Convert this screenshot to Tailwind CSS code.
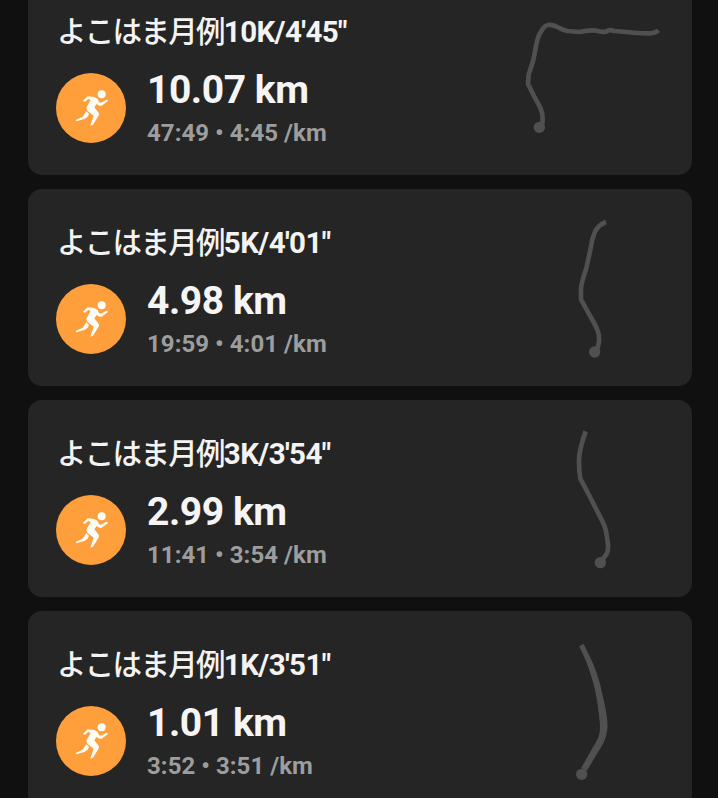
<!DOCTYPE html>
<html lang="ja">
<head>
  <meta charset="UTF-8">
  <title>Activities</title>
  <script src="https://cdn.jsdelivr.net/npm/@tailwindcss/browser@4"></script>
</head>
<body class="bg-[#101010] h-screen overflow-hidden font-['Roboto','Noto_Sans_CJK_JP',sans-serif]">
  <!-- List is scrolled a little, so the first card starts above the window -->
  <main id="activities" class="-mt-[22px] pl-7 pr-[26px] flex flex-col gap-3.5"></main>

  <script>
    // Data
    const activities = [
      {
        name: 'よこはま月例', race: `10K/4'45"`, distance: '10.07 km', stats: '47:49 • 4:45 /km',
        viewBox: '24 -21 450 450', dot: [88, 352], width: 14,
        route: 'M445 61Q438 69 420 70Q385 71 350 66L312 63Q298 57 288 65Q272 67 260 62Q236 59 208 66L172 63Q158 60 148 54Q126 43 116 45Q104 45 94 63Q84 78 79 103L70 150L56 194L54 222L72 258L91 293Q98 312 98 325L97 342'
      },
      {
        name: 'よこはま月例', race: `5K/4'01"`, distance: '4.98 km', stats: '19:59 • 4:01 /km',
        viewBox: '-126 12 450 450', dot: [104, 426], width: 14,
        route: 'M138 36Q116 44 105 65Q95 88 92 115L79 175Q65 215 63 235L63 268L82 303L104 342Q116 365 117 380Q119 398 112 416'
      },
      {
        name: 'よこはま月例', race: `3K/3'54"`, distance: '2.99 km', stats: '11:41 • 3:54 /km',
        viewBox: '-126 15 450 450', dot: [121, 428], width: 14,
        route: 'M77 34Q56 92 57 125Q57 155 61 176L87 225L120 290Q138 322 140 345L144 372Q145 395 139 403L126 420'
      },
      {
        name: 'よこはま月例', race: `1K/3'51"`, distance: '1.01 km', stats: '3:52 • 3:51 /km',
        viewBox: '-126 3 450 450', dot: [65, 418], width: 15,
        route: 'M64 30Q90 80 105 135Q120 185 127 265Q129 300 118 318L70 403M80 62Q107 115 120 180Q136 245 135 275Q134 300 123 322L74 404'
      }
    ];

    // Render cards
    const activitiesEl = document.getElementById('activities');
    activities.forEach(item => {
      const card = document.createElement('section');
      card.className = 'h-[197px] shrink-0 rounded-[14px] bg-[#252525] flex items-start justify-between pl-7 pr-6';
      card.innerHTML = `
        <div class="pt-9">
          <h2 class="pl-px text-[29.5px] leading-9 font-medium text-[#f3f3f3] whitespace-nowrap"><span class="tracking-[-1.7px]">${item.name}</span><span class="font-bold tracking-[-0.6px]">${item.race}</span></h2>
          <div class="mt-[18px] flex items-center gap-[21px]">
            <svg class="size-[70px] rounded-full bg-[#ff9f3c]" viewBox="18 24 210 210" fill="#fffdf8">
              <circle cx="155" cy="87.5" r="12" />
              <path d="M99 107L113 94L133 96L143 102L147 111L153 113L169 104L175 107L155 122L148 122L140 117L133 127L146 143L147 150L129 179L121 182L131 152L112 137L109 128L122 105L115 102L104 111Z" />
              <path d="M109 139L117 146L113 155L103 162L79 169L77 165L98 155Z" />
            </svg>
            <div class="pt-px whitespace-nowrap">
              <p class="-mt-px text-[39px] leading-[44px] font-bold tracking-[-0.45px] text-[#f5f5f5]">${item.distance}</p>
              <p class="mt-[5px] -mb-px text-2xl leading-8 font-bold tracking-[0.05px] text-[#9d9d9d]">${item.stats}</p>
            </div>
          </div>
        </div>
        <svg class="mt-[25px] size-[150px]" viewBox="${item.viewBox}" fill="none">
          <path d="${item.route}" stroke="#505050" stroke-width="${item.width}" stroke-linejoin="round" />
          <circle cx="${item.dot[0]}" cy="${item.dot[1]}" r="17" fill="#505050" />
        </svg>
      `;
      activitiesEl.appendChild(card);
    });
  </script>
</body>
</html>
